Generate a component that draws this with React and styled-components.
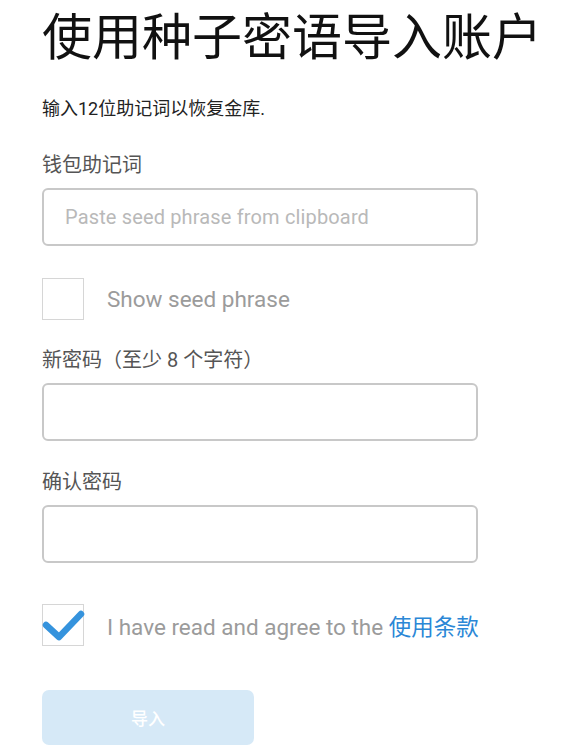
import React from "react";
import styled, { createGlobalStyle } from "styled-components";

const Global = createGlobalStyle`
  html, body { margin: 0; padding: 0; background: #fff; }
  body { font-family: Roboto, "Noto Sans CJK SC", "Noto Sans", sans-serif; }
  * { box-sizing: border-box; }
`;

const Page = styled.div`
  padding: 0 0 0 42px;
  display: flex;
  flex-direction: column;
`;

const Title = styled.h1`
  margin: 0;
  font-family: "Noto Sans CJK SC", sans-serif;
  font-weight: 400;
  font-size: 50px;
  line-height: 66px;
  color: #111;
`;

const Subtitle = styled.p`
  margin: 31px 0 0;
  height: 24px;
  font-family: Roboto, "Noto Sans CJK SC", sans-serif;
  font-size: 18px;
  line-height: 24px;
  color: #222;
`;

const Field = styled.div`
  margin-top: ${(p) => p.$top}px;
  display: flex;
  flex-direction: column;
  gap: 11px;
`;

const Label = styled.label`
  display: block;
  height: 24px;
  font-family: Roboto, "Noto Sans CJK SC", sans-serif;
  font-size: 20px;
  line-height: 24px;
  color: #555;
`;

const Input = styled.input`
  width: 436px;
  height: 58px;
  border: 2px solid #c8c8c8;
  border-radius: 6px;
  padding: 0 21px;
  font-family: Roboto, sans-serif;
  font-size: 20px;
  color: #333;
  outline: none;
  background: #fff;
  &::placeholder {
    color: #b9b9b9;
    letter-spacing: 0.15px;
  }
`;

const CheckRow = styled.label`
  margin-top: ${(p) => p.$top}px;
  display: flex;
  align-items: center;
  gap: 23px;
  height: 42px;
`;

const Box = styled.span`
  position: relative;
  flex: none;
  width: 42px;
  height: 42px;
  border: 1px solid #d6d6d6;
  background: #fff;
`;

const Tick = styled.svg`
  position: absolute;
  left: -1px;
  top: -1px;
`;

const CheckText = styled.span`
  font-family: Roboto, "Noto Sans CJK SC", sans-serif;
  font-size: 22.5px;
  color: #9b9b9b;
  white-space: nowrap;
`;

const Link = styled.a`
  color: #2b87d6;
  text-decoration: none;
`;

const Button = styled.button`
  margin-top: 44px;
  width: 212px;
  height: 55px;
  border: none;
  border-radius: 7px;
  background: #d6e9f7;
  color: #fff;
  font-family: "Noto Sans CJK SC", sans-serif;
  font-size: 17px;
  font-weight: 500;
`;

export default function App() {
  return (
    <>
      <Global />
      <Page>
        <Title>使用种子密语导入账户</Title>
        <Subtitle>输入12位助记词以恢复金库.</Subtitle>
        <Field $top={32}>
          <Label>钱包助记词</Label>
          <Input placeholder="Paste seed phrase from clipboard" />
        </Field>
        <CheckRow $top={32}>
          <Box />
          <CheckText>Show seed phrase</CheckText>
        </CheckRow>
        <Field $top={28}>
          <Label>新密码（至少 8 个字符）</Label>
          <Input type="password" />
        </Field>
        <Field $top={29}>
          <Label>确认密码</Label>
          <Input type="password" />
        </Field>
        <CheckRow $top={41}>
          <Box>
            <Tick width="44" height="44" viewBox="0 0 44 44">
              <path
                d="M4 21 L17 33 L39 10"
                fill="none"
                stroke="#3593dd"
                strokeWidth="6.5"
                strokeLinecap="round"
                strokeLinejoin="round"
              />
            </Tick>
          </Box>
          <CheckText>
            I have read and agree to the <Link href="#">使用条款</Link>
          </CheckText>
        </CheckRow>
        <Button>导入</Button>
      </Page>
    </>
  );
}
